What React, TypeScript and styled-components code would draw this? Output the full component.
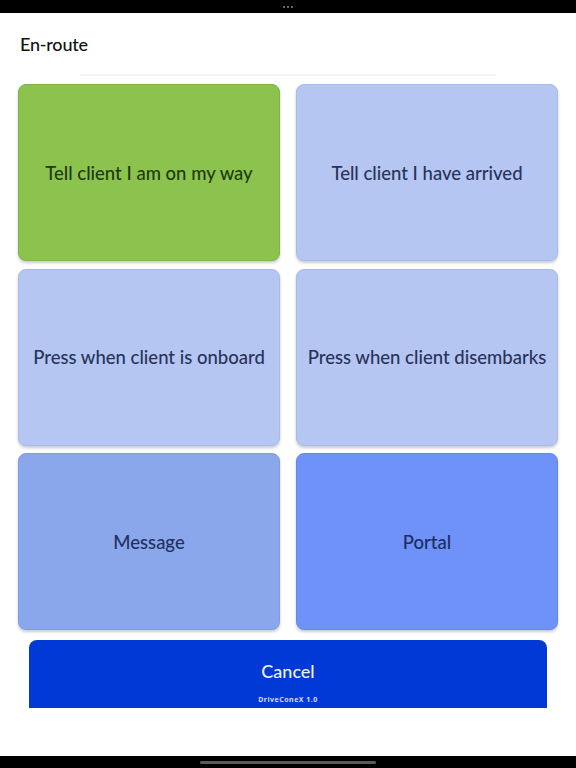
import React from "react";
import styled, { createGlobalStyle } from "styled-components";

const Global = createGlobalStyle`
  html, body { margin: 0; padding: 0; background: #ffffff; }
  body { font-family: "Lato", "Noto Sans", sans-serif; }
  * { box-sizing: border-box; }
`;

const Screen = styled.div`
  width: 576px;
  height: 768px;
  display: flex;
  flex-direction: column;
  background: #ffffff;
  overflow: hidden;
`;

const TopBar = styled.div`
  height: 13px;
  background: #000;
  display: flex;
  align-items: center;
  justify-content: center;
  gap: 2px;
`;

const Dot = styled.span`
  width: 2px;
  height: 2px;
  border-radius: 50%;
  background: #8a8a8a;
`;

const Header = styled.div`
  height: 63px;
  padding: 20px 20px 0;
  display: flex;
  flex-direction: column;
`;

const Title = styled.h1`
  margin: 0;
  font-size: 18px;
  line-height: 22px;
  font-weight: 500;
  color: #111;
  letter-spacing: -0.2px;
`;

const Divider = styled.div`
  margin: 19px 0 0 60px;
  width: 416px;
  height: 2px;
  background: #f3f4f6;
`;

const Grid = styled.div`
  margin: 8px 18px 0;
  display: grid;
  grid-template-columns: 262px 262px;
  grid-template-rows: 177px 177px 177px;
  column-gap: 16px;
  row-gap: 7.5px;
`;

const Tile = styled.button<{ $bg: string; $fg: string; $edge: string }>`
  appearance: none;
  margin: 0;
  padding: 0;
  border: 1px solid ${(p) => p.$edge};
  border-radius: 8px;
  background: ${(p) => p.$bg};
  color: ${(p) => p.$fg};
  font-family: "Lato", "Noto Sans", sans-serif;
  font-size: 18.5px;
  font-weight: 500;
  display: flex;
  align-items: center;
  justify-content: center;
  box-shadow: 0 2px 3px rgba(60, 70, 100, 0.28);
  cursor: pointer;
`;

const CancelWrap = styled.div`
  margin: 10px 29px 0;
  height: 68px;
  border-radius: 8px 8px 0 0;
  background: #0139d6;
  display: flex;
  flex-direction: column;
  align-items: center;
  padding-top: 20px;
`;

const CancelLabel = styled.span`
  font-size: 18px;
  line-height: 22px;
  font-weight: 500;
  color: #eef2ff;
`;

const Version = styled.span`
  margin-top: 13px;
  font-family: "Noto Sans", "DejaVu Sans", sans-serif;
  font-size: 7px;
  line-height: 9px;
  font-weight: 700;
  letter-spacing: 0.5px;
  color: #d6defc;
`;

const Spacer = styled.div`
  flex: 1;
`;

const BottomBar = styled.div`
  height: 12px;
  background: #000;
  display: flex;
  align-items: center;
  justify-content: center;
`;

const HomeIndicator = styled.div`
  width: 176px;
  height: 3px;
  border-radius: 2px;
  background: #5a5a5a;
`;

const tiles = [
  { label: "Tell client I am on my way", bg: "#8bc34e", fg: "#1f3a10", edge: "#7fb446" },
  { label: "Tell client I have arrived", bg: "#b5c6f2", fg: "#28335a", edge: "#a9bbe9" },
  { label: "Press when client is onboard", bg: "#b5c6f2", fg: "#28335a", edge: "#a9bbe9" },
  { label: "Press when client disembarks", bg: "#b5c6f2", fg: "#28335a", edge: "#a9bbe9" },
  { label: "Message", bg: "#8aa7ec", fg: "#223060", edge: "#809de3" },
  { label: "Portal", bg: "#6e92f8", fg: "#1d2c62", edge: "#6688ee" },
];

export default function App() {
  return (
    <>
      <Global />
      <Screen>
        <TopBar>
          <Dot />
          <Dot />
          <Dot />
        </TopBar>
        <Header>
          <Title>En-route</Title>
          <Divider />
        </Header>
        <Grid>
          {tiles.map((t) => (
            <Tile key={t.label} $bg={t.bg} $fg={t.fg} $edge={t.edge}>
              {t.label}
            </Tile>
          ))}
        </Grid>
        <CancelWrap>
          <CancelLabel>Cancel</CancelLabel>
          <Version>DriveConeX 1.0</Version>
        </CancelWrap>
        <Spacer />
        <BottomBar>
          <HomeIndicator />
        </BottomBar>
      </Screen>
    </>
  );
}
